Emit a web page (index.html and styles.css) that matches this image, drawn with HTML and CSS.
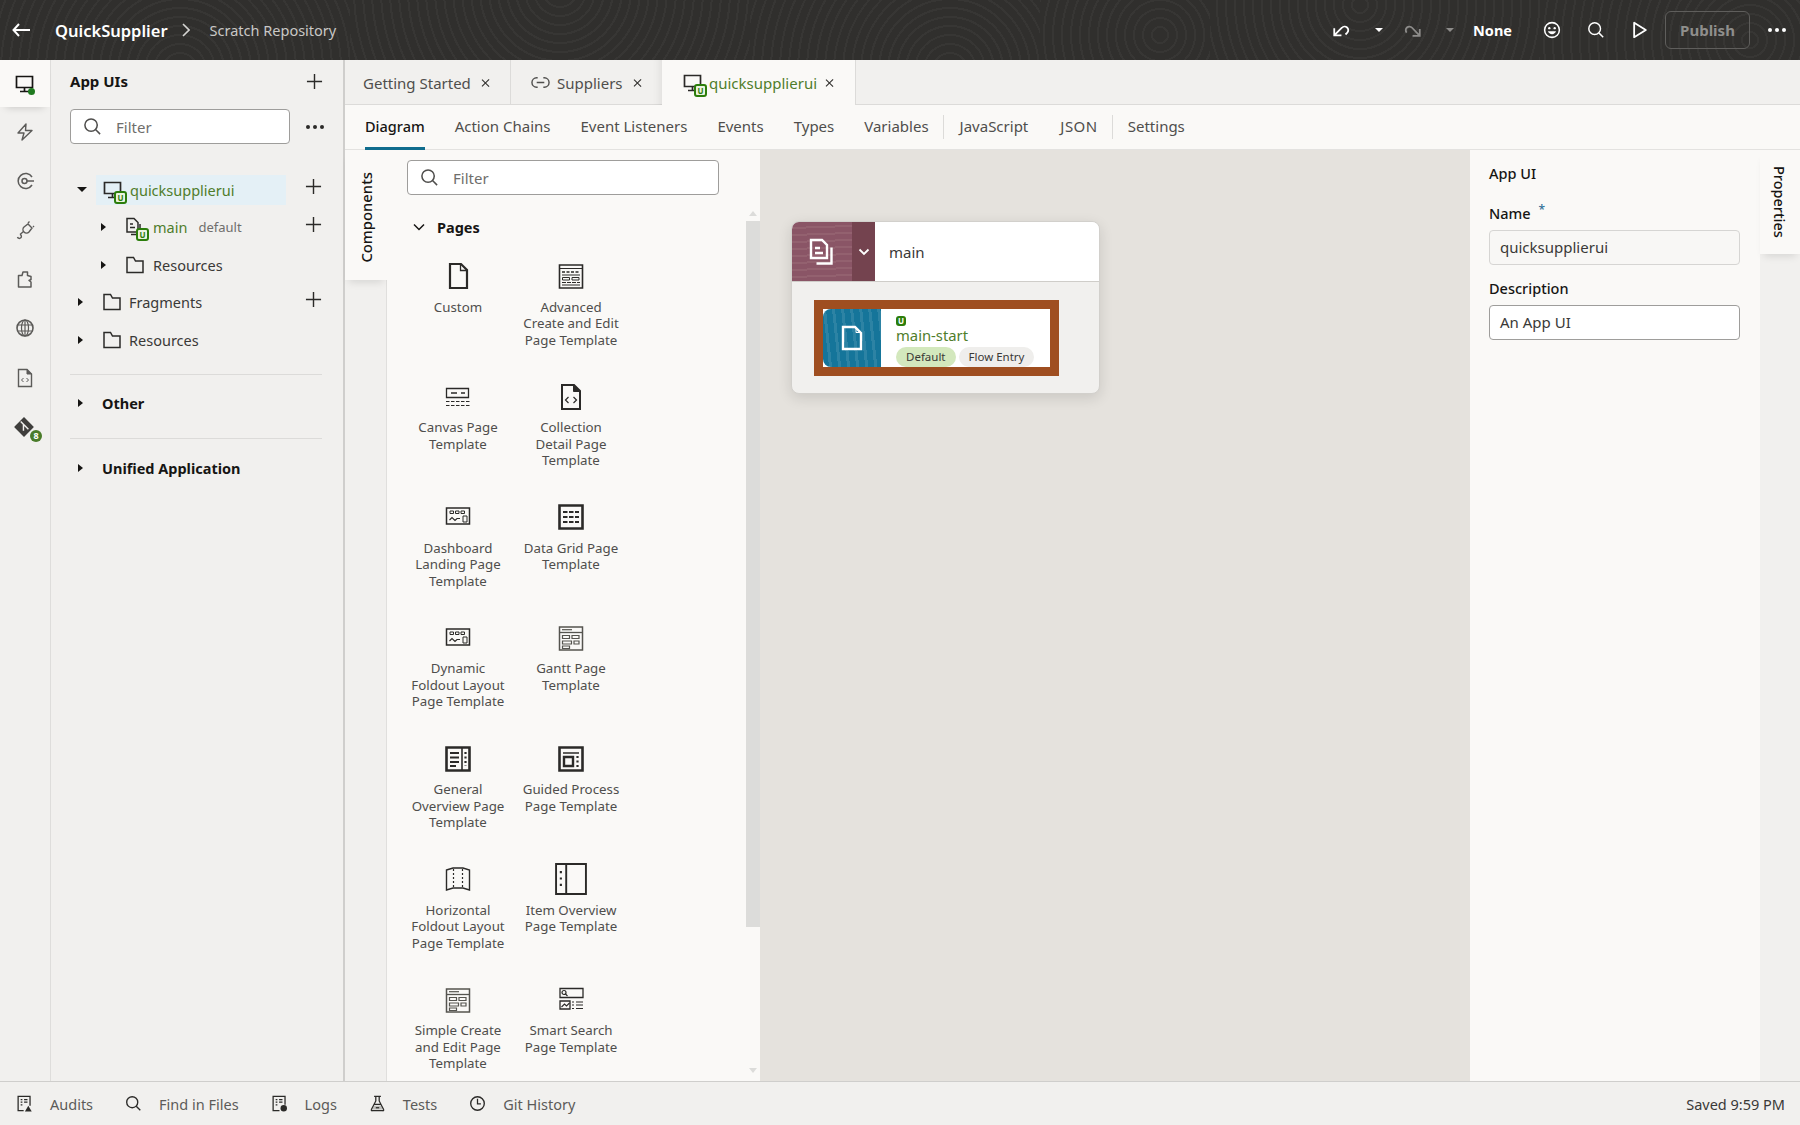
FILE: index.html
```html
<!DOCTYPE html>
<html lang="en">

<head>
  <meta charset="UTF-8">
  <meta name="viewport" content="width=device-width, initial-scale=1.0">
  <title>QuickSupplier - Scratch Repository</title>
  <link rel="stylesheet" href="styles.css">
</head>

<body>
  <svg class="defs" xmlns="http://www.w3.org/2000/svg">
    <symbol id="i-search" viewBox="0 0 20 20"><circle cx="8.5" cy="8.5" r="6.5" fill="none" stroke="currentColor" stroke-width="1.6"/><path d="M13.2 13.2 18 18" stroke="currentColor" stroke-width="1.6" fill="none"/></symbol>
    <symbol id="i-plus" viewBox="0 0 18 18"><path d="M9 1v16M1 9h16" stroke="currentColor" stroke-width="1.5" fill="none"/></symbol>
    <symbol id="i-monitor" viewBox="0 0 20 20"><path d="M1.500 2.500h16v11h-16zM9.500 13.500v3.500M5 17.500h9" fill="none" stroke="currentColor" stroke-width="1.700"/></symbol>
    <symbol id="i-bolt" viewBox="0 0 20 20"><path d="M11 2 3 11h6l-2 7 10-9.500h-6.500z" fill="none" stroke="currentColor" stroke-width="1.400" stroke-linejoin="round"/></symbol>
    <symbol id="i-event" viewBox="0 0 20 20"><path d="M17 6A7.500 7.500 0 1 0 17 14" fill="none" stroke="currentColor" stroke-width="1.500"/><circle cx="9.500" cy="10" r="2.500" fill="none" stroke="currentColor" stroke-width="1.500"/><path d="M12 10h7" stroke="currentColor" stroke-width="1.500"/></symbol>
    <symbol id="i-plug" viewBox="0 0 20 20"><path d="M9 7l4-3 4 4-3 4a3 3 0 0 1-5-5zM8.500 11.500 5 14.500M5 14.500a2 2 0 1 1-2.500 2.500M13 3l1.500-1.500M18 7l1-1" fill="none" stroke="currentColor" stroke-width="1.400"/></symbol>
    <symbol id="i-puzzle" viewBox="0 0 20 20"><path d="M3.500 18V6.500L7 6.500 8 3h4.500v3.500L16 7.500v3l-2 1 2 1.500v5z" fill="none" stroke="currentColor" stroke-width="1.500" stroke-linejoin="round"/></symbol>
    <symbol id="i-globe" viewBox="0 0 20 20"><circle cx="10" cy="10" r="8" fill="none" stroke="currentColor" stroke-width="1.600"/><ellipse cx="10" cy="10" rx="3.500" ry="8" fill="none" stroke="currentColor" stroke-width="1.200"/><path d="M2.500 7h15M2.500 13h15M10 2v16" stroke="currentColor" stroke-width="1.200"/></symbol>
    <symbol id="i-code" viewBox="0 0 20 20"><path d="M3.500 1.500h8.500l4.500 4.500v12.500h-13z" fill="none" stroke="currentColor" stroke-width="1.400"/><path d="M12 1.500v4.500h4.500" fill="currentColor" stroke="currentColor"/><path d="M8.500 10 6.500 12l2 2M11.500 10l2 2-2 2" fill="none" stroke="currentColor" stroke-width="1"/></symbol>
    <symbol id="i-git" viewBox="0 0 20 20"><path d="M10 1 19 10l-9 9-9-9z" fill="currentColor"/><path d="M7 5l7 7M9.500 7.500v6" stroke="#f1f0ee" stroke-width="1.300"/></symbol>
    <symbol id="i-folder" viewBox="0 0 20 20"><path d="M2 17.500V2.500h6.500l2 3.500h7.500v11.500z" fill="none" stroke="currentColor" stroke-width="1.500"/></symbol>
    <symbol id="i-pages" viewBox="0 0 20 20"><path d="M2 1.500h7l4 4v9.500H2z" fill="none" stroke="currentColor" stroke-width="1.500"/><path d="M5 7h3M5 10.500h5" stroke="currentColor" stroke-width="1.500"/><path d="M15 7v10.500H6" fill="none" stroke="currentColor" stroke-width="1.500"/></symbol>
    <symbol id="i-flow" viewBox="0 0 26 28"><path d="M2 2h11l5 5v13H2z" fill="none" stroke="currentColor" stroke-width="2.400"/><path d="M6 10h5M6 15h8" stroke="currentColor" stroke-width="2.400"/><path d="M22.500 9.500V25.500H7.500" fill="none" stroke="currentColor" stroke-width="2.400"/></symbol>
    <symbol id="i-link" viewBox="0 0 20 20"><path d="M7 5H6a5 5 0 0 0 0 10h1M13 5h1a5 5 0 0 1 0 10h-1M6 10h8" fill="none" stroke="currentColor" stroke-width="1.500"/></symbol>
    <symbol id="i-undo" viewBox="0 0 20 20"><path d="M2.500 8v8h8M3 15.500 11 7.500a4 4 0 0 1 6 5.500l-2 2" fill="none" stroke="currentColor" stroke-width="2"/></symbol>
    <symbol id="i-redo" viewBox="0 0 20 20"><path d="M17.500 9v7.500h-8M17 16 9 7.500a4 4 0 0 0-6 5.500" fill="none" stroke="currentColor" stroke-width="2"/></symbol>
    <symbol id="i-smile" viewBox="0 0 20 20"><circle cx="10" cy="10" r="8.200" fill="none" stroke="currentColor" stroke-width="1.700"/><circle cx="7" cy="8" r="1.300" fill="currentColor"/><circle cx="13" cy="8" r="1.300" fill="currentColor"/><path d="M5.500 11.500a4.800 4.800 0 0 0 9 0z" fill="currentColor"/></symbol>
    <symbol id="i-play" viewBox="0 0 20 20"><path d="M3.500 2v16l13-8z" fill="none" stroke="currentColor" stroke-width="2" stroke-linejoin="round"/></symbol>
    <symbol id="i-audit" viewBox="0 0 20 20"><path d="M9 18.500H2.500v-17h14v11" fill="none" stroke="currentColor" stroke-width="1.500"/><path d="M5.500 5.500h2M9.500 5.500h4M5.500 8.500h2M9.500 8.500h4M5.500 11.500h2" stroke="currentColor" stroke-width="1.500"/><path d="M14.500 12.500 18.500 19.500h-8z" fill="currentColor"/></symbol>
    <symbol id="i-log" viewBox="0 0 20 20"><path d="M10 18.500H2.500v-17h14v10" fill="none" stroke="currentColor" stroke-width="1.500"/><path d="M5.500 5.500h2M9.500 5.500h4M5.500 8.500h2M9.500 8.500h4M5.500 11.500h2" stroke="currentColor" stroke-width="1.500"/><circle cx="15" cy="15.500" r="3.800" fill="currentColor"/></symbol>
    <symbol id="i-flask" viewBox="0 0 20 20"><path d="M6 1.500h8M8 2v5L2.800 17a1 1 0 0 0 1 1.500h12.400a1 1 0 0 0 1-1.500L12 7V2M6 11h8" fill="none" stroke="currentColor" stroke-width="1.500"/><path d="M5.500 12.500h9l2 4.500h-13z" fill="currentColor" opacity=".25"/><path d="M8 15h4" stroke="currentColor" stroke-width="1.500"/></symbol>
    <symbol id="i-clock" viewBox="0 0 20 20"><circle cx="10" cy="10" r="8" fill="none" stroke="currentColor" stroke-width="1.600"/><path d="M10 4.500V10.500H14" fill="none" stroke="currentColor" stroke-width="1.500"/></symbol>

    <symbol id="t-custom" viewBox="0 0 26 30"><path d="M5 3h11l6 6v18H5z" fill="none" stroke="currentColor" stroke-width="2.200"/><path d="M15.500 3v6.500H22" fill="none" stroke="currentColor" stroke-width="1.300"/></symbol>
    <symbol id="t-advanced" viewBox="0 0 26 30"><path d="M1.500 4h23v23h-23z" fill="none" stroke="currentColor" stroke-width="1.600"/><path d="M1.500 7.500h23" stroke="currentColor" stroke-width="1"/><path d="M4 11h18" stroke="currentColor" stroke-width="1.500" stroke-dasharray="3 1.500"/><path d="M4 14h18M4 24h18" stroke="currentColor" stroke-width="1"/><path d="M4.500 16.500h7v2.500h-7zM14 16.500h7v2.500h-7z" fill="none" stroke="currentColor" stroke-width="1"/><path d="M4 21.500h18" stroke="currentColor" stroke-width="1.200" stroke-dasharray="4 1"/></symbol>
    <symbol id="t-canvas" viewBox="0 0 26 30"><path d="M1.500 6.500h22v9h-22z" fill="none" stroke="currentColor" stroke-width="1.300"/><path d="M6 11h6M16 11h4" stroke="currentColor" stroke-width="1.300"/><path d="M1 19.500h24M1 23.500h24" stroke="currentColor" stroke-width="1.200" stroke-dasharray="3.500 1.500"/></symbol>
    <symbol id="t-collection" viewBox="0 0 26 30"><path d="M4 3h12l6 6v18H4z" fill="none" stroke="currentColor" stroke-width="2"/><path d="M15.500 3v6.500H22" fill="currentColor" stroke="currentColor"/><path d="M10.500 15 7.500 18l3 3M15.500 15l3 3-3 3" fill="none" stroke="currentColor" stroke-width="1.200"/></symbol>
    <symbol id="t-dashboard" viewBox="0 0 26 30"><path d="M1.500 6h23v16h-23z" fill="none" stroke="currentColor" stroke-width="1.500"/><path d="M5 9h3.500v2.500H5zM10.500 9h3.500v2.500h-3.500zM16 9h3.500v2.500H16zM18 14h4v6h-4z" fill="none" stroke="currentColor" stroke-width="1"/><path d="M4.500 18l2.500-2.500 3 3 2-2h3" fill="none" stroke="currentColor" stroke-width="1.100"/></symbol>
    <symbol id="t-grid" viewBox="0 0 26 30"><path d="M1.500 3.500h23v23h-23z" fill="none" stroke="currentColor" stroke-width="2.600"/><path d="M5 10h16M5 15h16M5 20h16" stroke="currentColor" stroke-width="2.200" stroke-dasharray="4.500 1.500"/></symbol>
    <symbol id="t-form" viewBox="0 0 26 30"><path d="M1.500 4h23v23h-23z" fill="none" stroke="currentColor" stroke-width="1.500"/><path d="M1.500 9.500h23" stroke="currentColor" stroke-width="1.300"/><path d="M4 6.700h10" stroke="currentColor" stroke-width="1.200"/><path d="M4.500 12.500h7v3h-7zM14 12.500h7v3h-7zM4.500 18h9v3h-9zM16 18h5v3h-5zM4.500 23h7v2.500h-7z" fill="none" stroke="currentColor" stroke-width="1.200"/></symbol>
    <symbol id="t-general" viewBox="0 0 26 30"><path d="M1.500 3.500h23v23h-23z" fill="none" stroke="currentColor" stroke-width="2.600"/><path d="M17 3.500v23" stroke="currentColor" stroke-width="1.600"/><path d="M5 9h9M5 13.500h9M5 18h9M5 22h6" stroke="currentColor" stroke-width="2"/><path d="M20.500 8v14" stroke="currentColor" stroke-width="2.200" stroke-dasharray="2 2.500"/></symbol>
    <symbol id="t-guided" viewBox="0 0 26 30"><path d="M1.500 3.500h23v23h-23z" fill="none" stroke="currentColor" stroke-width="2.600"/><path d="M5 9h16" stroke="currentColor" stroke-width="1.500"/><path d="M6 13h9v9H6z" fill="none" stroke="currentColor" stroke-width="2.400"/><path d="M19.500 12v11" stroke="currentColor" stroke-width="2.200" stroke-dasharray="2 2.500"/></symbol>
    <symbol id="t-foldout" viewBox="0 0 26 30"><path d="M1.500 6 8 4h10l6.500 2v20l-6.500-2H8l-6.500 2z" fill="none" stroke="currentColor" stroke-width="1.400"/><path d="M8.500 5v19M17.500 5v19" stroke="currentColor" stroke-width="1.200" stroke-dasharray="2 2"/></symbol>
    <symbol id="t-item" viewBox="0 0 30 30"><path d="M1 1h28v28H1z" fill="none" stroke="currentColor" stroke-width="1.800"/><path d="M10.500 1v28" stroke="currentColor" stroke-width="1.800"/><path d="M5.500 7.500v16" stroke="currentColor" stroke-width="2" stroke-dasharray="2 4"/></symbol>
    <symbol id="t-smart" viewBox="0 0 26 30"><path d="M2 3.500h23v9H2zM2 16h10v8H2z" fill="none" stroke="currentColor" stroke-width="1.300"/><circle cx="6" cy="7.500" r="2" fill="none" stroke="currentColor" stroke-width="1.200"/><path d="M7.500 9l2 2M3.500 22l3-3 2 2 3-3" fill="none" stroke="currentColor" stroke-width="1.100"/><path d="M14 17h2M18 17h7M14 20h2M18 20h7M14 23.500h2M18 23.500h7" stroke="currentColor" stroke-width="1.200"/></symbol>
  </svg>

  <header class="topbar">
    <div class="top-left">
      <svg class="back" viewBox="0 0 18 14"><path d="M7 1 1.500 7 7 13M2 7h16" fill="none" stroke="currentColor" stroke-width="2"/></svg>
      <span class="app-name">QuickSupplier</span>
      <svg class="crumb" viewBox="0 0 8 14"><path d="M1 1l6 6-6 6" fill="none" stroke="currentColor" stroke-width="1.600"/></svg>
      <span class="repo">Scratch Repository</span>
    </div>
    <div class="top-right">
      <svg class="tool undo"><use href="#i-undo"/></svg>
      <span class="tcaret"></span>
      <svg class="tool redo"><use href="#i-redo"/></svg>
      <span class="tcaret dim"></span>
      <span class="none-label">None</span>
      <svg class="tool smile"><use href="#i-smile"/></svg>
      <svg class="tool find"><use href="#i-search"/></svg>
      <svg class="tool play"><use href="#i-play"/></svg>
      <button class="publish">Publish</button>
      <span class="top-dots"><i></i><i></i><i></i></span>
    </div>
  </header>

  <main class="workbench">
    <nav class="rail">
      <div class="rail-item active">
        <svg><use href="#i-monitor"/></svg><span class="rail-dot"></span>
      </div>
      <div class="rail-item"><svg><use href="#i-bolt"/></svg></div>
      <div class="rail-item"><svg><use href="#i-event"/></svg></div>
      <div class="rail-item"><svg><use href="#i-plug"/></svg></div>
      <div class="rail-item"><svg><use href="#i-puzzle"/></svg></div>
      <div class="rail-item"><svg><use href="#i-globe"/></svg></div>
      <div class="rail-item"><svg><use href="#i-code"/></svg></div>
      <div class="rail-item git"><svg><use href="#i-git"/></svg><span class="git-count">8</span></div>
    </nav>

    <aside class="side">
      <div class="side-head">
        <span class="side-title">App UIs</span>
        <svg class="plus"><use href="#i-plus"/></svg>
      </div>
      <div class="side-filter">
        <div class="filter side-input">
          <svg><use href="#i-search"/></svg><span>Filter</span>
        </div>
        <span class="dots"><i></i><i></i><i></i></span>
      </div>

      <ul class="tree">
        <li class="tree-row lvl0">
          <span class="caret down"></span>
          <div class="tree-sel">
            <span class="tree-icon"><svg><use href="#i-monitor"/></svg><b class="ubadge">U</b></span>
            <span class="green">quicksupplierui</span>
          </div>
          <svg class="plus raised"><use href="#i-plus"/></svg>
        </li>
        <li class="tree-row lvl1">
          <span class="caret"></span>
          <span class="tree-icon"><svg><use href="#i-pages"/></svg><b class="ubadge">U</b></span>
          <span class="green">main</span><span class="muted">default</span>
          <svg class="plus raised"><use href="#i-plus"/></svg>
        </li>
        <li class="tree-row lvl1">
          <span class="caret"></span>
          <span class="tree-icon"><svg><use href="#i-folder"/></svg></span>
          <span>Resources</span>
        </li>
        <li class="tree-row lvl0">
          <span class="caret"></span>
          <span class="tree-icon"><svg><use href="#i-folder"/></svg></span>
          <span>Fragments</span>
          <svg class="plus raised"><use href="#i-plus"/></svg>
        </li>
        <li class="tree-row lvl0">
          <span class="caret"></span>
          <span class="tree-icon"><svg><use href="#i-folder"/></svg></span>
          <span>Resources</span>
        </li>
      </ul>

      <div class="side-section first"><span class="caret"></span><strong>Other</strong></div>
      <div class="side-section"><span class="caret"></span><strong>Unified Application</strong></div>
    </aside>

    <section class="content">
      <div class="tabs">
        <div class="tab tab-start">Getting Started <span class="close"></span></div>
        <div class="tab tab-sup"><svg><use href="#i-link"/></svg>Suppliers <span class="close"></span></div>
        <div class="tab tab-cur">
          <span class="tree-icon"><svg><use href="#i-monitor"/></svg><b class="ubadge">U</b></span>
          <span class="green">quicksupplierui</span> <span class="close"></span>
        </div>
      </div>

      <div class="subnav">
        <a class="current">Diagram</a>
        <a>Action Chains</a>
        <a>Event Listeners</a>
        <a>Events</a>
        <a>Types</a>
        <a class="sep-after">Variables</a>
        <a class="js">JavaScript</a>
        <a class="sep-after json">JSON</a>
        <a>Settings</a>
      </div>

      <div class="editor">
        <div class="vtab-col left">
          <div class="vtab"><span>Components</span></div>
        </div>

        <div class="palette">
          <div class="palette-inner">
            <div class="filter palette-input">
              <svg><use href="#i-search"/></svg><span>Filter</span>
            </div>
            <div class="palette-head">
              <svg viewBox="0 0 12 8"><path d="M1 1.500 6 6.500l5-5" fill="none" stroke="currentColor" stroke-width="1.500"/></svg>
              <strong>Pages</strong>
            </div>
            <div class="templates">
              <div class="tpl"><svg><use href="#t-custom"/></svg><p>Custom</p></div>
              <div class="tpl"><svg><use href="#t-advanced"/></svg><p>Advanced<br>Create and Edit<br>Page Template</p></div>
              <div class="tpl"><svg><use href="#t-canvas"/></svg><p>Canvas Page<br>Template</p></div>
              <div class="tpl"><svg><use href="#t-collection"/></svg><p>Collection<br>Detail Page<br>Template</p></div>
              <div class="tpl"><svg><use href="#t-dashboard"/></svg><p>Dashboard<br>Landing Page<br>Template</p></div>
              <div class="tpl"><svg><use href="#t-grid"/></svg><p>Data Grid Page<br>Template</p></div>
              <div class="tpl"><svg><use href="#t-dashboard"/></svg><p>Dynamic<br>Foldout Layout<br>Page Template</p></div>
              <div class="tpl"><svg class="thin"><use href="#t-form"/></svg><p>Gantt Page<br>Template</p></div>
              <div class="tpl"><svg><use href="#t-general"/></svg><p>General<br>Overview Page<br>Template</p></div>
              <div class="tpl"><svg><use href="#t-guided"/></svg><p>Guided Process<br>Page Template</p></div>
              <div class="tpl"><svg><use href="#t-foldout"/></svg><p>Horizontal<br>Foldout Layout<br>Page Template</p></div>
              <div class="tpl"><svg class="wide"><use href="#t-item"/></svg><p>Item Overview<br>Page Template</p></div>
              <div class="tpl"><svg class="thin"><use href="#t-form"/></svg><p>Simple Create<br>and Edit Page<br>Template</p></div>
              <div class="tpl"><svg><use href="#t-smart"/></svg><p>Smart Search<br>Page Template</p></div>
            </div>
          </div>
          <div class="scroll">
            <span class="arrow up"></span>
            <span class="thumb"></span>
            <span class="arrow dn"></span>
          </div>
        </div>

        <div class="canvas">
          <div class="flow-card">
            <div class="flow-head">
              <div class="flow-badge"><svg><use href="#i-flow"/></svg></div>
              <div class="flow-toggle"><svg viewBox="0 0 12 8"><path d="M1.500 1.500 6 6l4.500-4.500" fill="none" stroke="currentColor" stroke-width="1.800"/></svg></div>
              <span class="flow-name">main</span>
            </div>
            <div class="flow-body">
              <div class="page-node">
                <div class="page-thumb"><svg viewBox="0 0 22 26"><path d="M2 2h12l6 6v16H2z" fill="none" stroke="currentColor" stroke-width="2.400"/><path d="M15 2.500v5h5" fill="none" stroke="currentColor" stroke-width="1"/></svg></div>
                <div class="page-info">
                  <b class="ubadge">U</b>
                  <span class="green page-name">main-start</span>
                  <div class="chips"><span class="chip on">Default</span><span class="chip">Flow Entry</span></div>
                </div>
              </div>
            </div>
          </div>
        </div>

        <div class="props">
          <h2>App UI</h2>
          <label class="field-label first">Name <span class="req">*</span></label>
          <div class="field readonly">quicksupplierui</div>
          <label class="field-label">Description</label>
          <div class="field">An App UI</div>
        </div>

        <div class="vtab-col right">
          <div class="vtab"><span>Properties</span></div>
        </div>
      </div>
    </section>
  </main>

  <footer class="statusbar">
    <a class="st-audit"><svg><use href="#i-audit"/></svg>Audits</a>
    <a><svg><use href="#i-search"/></svg>Find in Files</a>
    <a><svg><use href="#i-log"/></svg>Logs</a>
    <a><svg><use href="#i-flask"/></svg>Tests</a>
    <a><svg><use href="#i-clock"/></svg>Git History</a>
    <span class="saved">Saved 9:59 PM</span>
  </footer>
</body>

</html>
```

FILE: styles.css
```css
* {
  box-sizing: border-box;
}

html, body {
  margin: 0;
  height: 100%;
  overflow: hidden;
}

body {
  display: flex;
  flex-direction: column;
  background: #f1f0ee;
  color: #161513;
  font-family: "Noto Sans", Arial, sans-serif;
  font-size: 15px;
}

.defs {
  display: none;
}

ul {
  list-style: none;
  margin: 0;
  padding: 0;
}

.green {
  color: #4f7d2b;
}

/* top bar */
.topbar {
  height: 60px;
  flex: none;
  display: flex;
  align-items: center;
  justify-content: space-between;
  color: #fff;
  background-color: #302f2d;
  background-image:
    repeating-radial-gradient(circle at 180px 70px, transparent 0 7px, rgba(255,255,255,.035) 7px 9px),
    repeating-radial-gradient(circle at 210px -10px, transparent 0 7px, rgba(255,255,255,.035) 7px 9px),
    repeating-radial-gradient(circle at 200px 70px, transparent 0 7px, rgba(255,255,255,.035) 7px 9px),
    repeating-radial-gradient(circle at 120px 35px, transparent 0 7px, rgba(255,255,255,.035) 7px 9px),
    repeating-radial-gradient(circle at 150px 5px, transparent 0 7px, rgba(255,255,255,.035) 7px 9px),
    repeating-radial-gradient(circle at 210px 40px, transparent 0 7px, rgba(255,255,255,.035) 7px 9px);
  background-size: 350px 60px, 400px 60px, 290px 60px, 170px 60px, 330px 60px, 260px 60px;
  background-position: 0 0, 350px 0, 750px 0, 1040px 0, 1210px 0, 1540px 0;
  background-repeat: no-repeat;
}

.top-left, .top-right {
  display: flex;
  align-items: center;
}

.back {
  width: 18px;
  height: 14px;
  margin-left: 12px;
}

.app-name {
  margin-left: 25px;
  font-size: 16.500px;
  font-weight: 600;
}

.crumb {
  width: 8px;
  height: 14px;
  margin-left: 14px;
  color: #d5d4d2;
}

.repo {
  margin-left: 20px;
  font-size: 14.500px;
  color: #c9c8c6;
}

.tool {
  width: 18px;
  height: 18px;
}

.tcaret {
  width: 0;
  height: 0;
  margin-left: 25px;
  border: 4px solid transparent;
  border-top-color: #fff;
  border-bottom: 0;
}

.tcaret.dim {
  border-top-color: #8d8c8a;
}

.redo {
  margin-left: 21px;
  color: #8d8c8a;
}

.redo + .tcaret {
  margin-left: 24px;
}

.none-label {
  margin-left: 19px;
  font-size: 14.500px;
  font-weight: 700;
}

.smile {
  margin-left: 31px;
}

.find {
  margin-left: 26px;
}

.play {
  margin-left: 26px;
}

.publish {
  width: 85px;
  height: 38px;
  margin-left: 16px;
  border: 1px solid #5f5e5c;
  border-radius: 6px;
  background: transparent;
  color: #8f8e8c;
  font: 700 15px "Noto Sans", Arial, sans-serif;
}

.top-dots {
  display: flex;
  gap: 3px;
  margin: 0 14px 0 18px;
}

.top-dots i, .dots i {
  width: 4px;
  height: 4px;
  border-radius: 50%;
  background: currentColor;
}

/* workbench */
.workbench {
  flex: 1;
  min-height: 0;
  display: flex;
}

.rail {
  width: 51px;
  flex: none;
  border-right: 1px solid #dedddb;
  color: #5c5b59;
}

.rail-item {
  position: relative;
  height: 49.200px;
  display: flex;
  align-items: center;
  justify-content: center;
}

.rail-item svg {
  width: 20px;
  height: 20px;
}

.rail-item.active {
  height: 47px;
  background: #faf9f7;
  color: #161513;
  box-shadow: 0 6px 8px -6px rgba(0,0,0,.2);
}

.rail-dot {
  position: absolute;
  left: 28px;
  top: 28px;
  width: 7px;
  height: 7px;
  border-radius: 50%;
  background: #1f7a1f;
}

.rail-item.git svg {
  width: 22px;
  height: 22px;
  color: #3f3e3c;
  margin-left: -2px;
}

.git-count {
  position: absolute;
  left: 30px;
  top: 28px;
  width: 12px;
  height: 12px;
  border-radius: 50%;
  background: #4a7c2a;
  color: #fff;
  font-size: 9px;
  font-weight: 700;
  line-height: 12px;
  text-align: center;
}

/* side panel */
.side {
  width: 294px;
  flex: none;
  border-right: 2px solid #cfcecc;
  padding-left: 19px;
  font-size: 14.500px;
}

.side-head {
  height: 42px;
  display: flex;
  align-items: center;
  justify-content: space-between;
  padding: 0 20px 0 0;
}

.side-title {
  font-size: 15px;
  font-weight: 700;
}

.plus {
  width: 17px;
  height: 17px;
  color: #2b2a28;
  flex: none;
}

.filter {
  display: flex;
  align-items: center;
  height: 35px;
  background: #fff;
  border: 1px solid #9e9d9b;
  border-radius: 4px;
  color: #6f6e6c;
  font-size: 15px;
}

.filter svg {
  width: 19px;
  height: 19px;
  color: #4f4e4c;
  margin: 0 14px 0 12px;
  flex: none;
}

.side-filter {
  display: flex;
  align-items: center;
  margin-top: 7px;
}

.side-input {
  width: 220px;
}

.dots {
  display: flex;
  gap: 3px;
  margin-left: 16px;
  color: #2b2a28;
}

.tree {
  margin-top: 27px;
}

.tree-row {
  position: relative;
  height: 37.500px;
  display: flex;
  align-items: center;
  color: #3a3937;
}

.tree-row.lvl0 {
  padding-left: 8px;
}

.tree-row.lvl1 {
  padding-left: 31px;
}

.tree-row .plus {
  position: absolute;
  left: 235px;
  top: 7px;
}

.caret {
  width: 0;
  height: 0;
  flex: none;
  margin-right: 19px;
  border-style: solid;
  border-width: 4.500px 0 4.500px 5px;
  border-color: transparent transparent transparent #161513;
}

.caret.down {
  margin-left: -1px;
  margin-right: 14px;
  border-width: 5px 5px 0;
  border-color: #161513 transparent transparent;
}

.tree-sel {
  display: flex;
  align-items: center;
  width: 190px;
  height: 30px;
  margin-left: -5px;
  padding-left: 7px;
  background: #e4f0f6;
}

.tree-icon {
  position: relative;
  width: 20px;
  height: 20px;
  flex: none;
  margin-right: 7px;
  color: #2b2a28;
  display: inline-block;
}

.lvl1 .tree-icon {
  margin-right: 8px;
}

.tree-icon svg {
  width: 20px;
  height: 20px;
  display: block;
}

.ubadge {
  display: inline-block;
  width: 10px;
  height: 10px;
  border-radius: 3px;
  background: #2b7d0b;
  color: #fff;
  font-size: 8px;
  font-weight: 700;
  line-height: 10px;
  text-align: center;
}

.tree-icon .ubadge {
  position: absolute;
  right: -4px;
  bottom: -4px;
  width: 13px;
  height: 13px;
  border: 2px solid #2b7d0b;
  background: #eaf3df;
  color: #2b7d0b;
  line-height: 9px;
}

.muted {
  margin-left: 11px;
  color: #6f6e6c;
  font-size: 13px;
}

.side-section {
  display: flex;
  align-items: center;
  width: 252px;
  height: 64.500px;
  padding: 0 0 6px 8px;
  border-top: 1px solid #dcdbd9;
}

.side-section.first {
  margin-top: 15px;
}

.side-section strong {
  font-size: 14.500px;
  font-weight: 700;
}

.side-section .caret {
  margin-right: 19px;
}

/* main column */
.content {
  flex: 1;
  min-width: 0;
  display: flex;
  flex-direction: column;
}

.tabs {
  height: 45px;
  flex: none;
  display: flex;
  border-bottom: 1px solid #dcdbd9;
  color: #4f4e4c;
}

.tab {
  display: flex;
  align-items: center;
  height: 45px;
  white-space: pre;
}

.tab-start {
  width: 166px;
  padding-left: 18px;
  border-right: 1px solid #dcdbd9;
}

.tab-sup {
  width: 151px;
  padding-left: 20px;
  box-shadow: inset -10px 0 8px -8px rgba(0,0,0,.08);
}

.tab-sup svg {
  width: 19px;
  height: 19px;
  margin-right: 7px;
}

.tab-cur {
  width: 194px;
  padding-left: 21px;
  background: #faf9f7;
  border-right: 1px solid #dcdbd9;
}

.tab-cur .tree-icon {
  margin-right: 6px;
}

.close {
  position: relative;
  width: 10px;
  height: 10px;
  margin-left: 6px;
}

.tab-sup .close {
  margin-left: 7px;
}

.tab-cur .close {
  margin-left: 8px;
}

.close::before, .close::after {
  content: "";
  position: absolute;
  left: 4px;
  top: 0;
  width: 1.300px;
  height: 10px;
  background: #2b2a28;
  transform: rotate(45deg);
}

.close::after {
  transform: rotate(-45deg);
}

.subnav {
  height: 45px;
  flex: none;
  display: flex;
  padding-left: 20px;
  background: #faf9f7;
  border-bottom: 1px solid #e3e2e0;
  color: #4f4e4c;
}

.subnav a {
  height: 45px;
  line-height: 43px;
  margin-right: 30px;
  position: relative;
}

.subnav a.current {
  color: #161513;
  font-size: 14.500px;
  font-weight: 500;
  border-bottom: 3px solid #0f6c8d;
}

.subnav a.sep-after::after {
  content: "";
  position: absolute;
  right: -15px;
  top: 10px;
  height: 24px;
  border-right: 1px solid #dcdbd9;
}

.subnav .js {
  margin-left: 1px;
}

.subnav .json {
  margin-left: 2px;
  letter-spacing: .5px;
}

.editor {
  flex: 1;
  min-height: 0;
  display: flex;
}

.vtab-col {
  flex: none;
  background: #f1f0ee;
}

.vtab-col.left {
  width: 42px;
  border-right: 1px solid #e0dfdd;
}

.vtab-col.right {
  width: 40px;
}

.vtab {
  display: flex;
  justify-content: center;
  align-items: flex-start;
  background: #faf9f7;
  box-shadow: 0 6px 8px -4px rgba(0,0,0,.12);
}

.vtab span {
  writing-mode: vertical-rl;
  font-size: 14.500px;
  font-weight: 500;
}

.left .vtab {
  width: 42px;
  height: 130px;
  padding-top: 22px;
}

.left .vtab span {
  font-size: 14.800px;
  transform: rotate(180deg);
}

.right .vtab {
  height: 104px;
  padding-top: 16px;
}

/* palette */
.palette {
  width: 373px;
  flex: none;
  display: flex;
  background: #faf9f7;
}

.palette-inner {
  flex: 1;
  min-width: 0;
  overflow: hidden;
  padding: 10px 0 0 20px;
}

.palette-input {
  width: 312px;
}

.palette-head {
  display: flex;
  align-items: center;
  height: 32px;
  margin-top: 16px;
  padding-left: 6px;
}

.palette-head svg {
  width: 12px;
  height: 8px;
  margin-right: 12px;
}

.palette-head strong {
  font-size: 14.500px;
  font-weight: 700;
}

.templates {
  display: grid;
  grid-template-columns: 113px 113px;
  grid-auto-rows: 120.650px;
  margin: 18px 0 0 -5.500px;
}

.tpl {
  text-align: center;
  color: #2b2a28;
}

.tpl svg {
  display: block;
  width: 26px;
  height: 30px;
  margin: 0 auto 7.500px;
}

.tpl svg.thin {
  color: #55544f;
}

.tpl svg.wide {
  width: 32px;
  height: 32px;
  margin: -1px auto 6.500px;
}

.tpl p {
  margin: 0;
  color: #4f4e4c;
  font-size: 13.300px;
  line-height: 16.500px;
  white-space: nowrap;
}

.scroll {
  width: 14px;
  flex: none;
  display: flex;
  flex-direction: column;
  align-items: center;
  padding-top: 61px;
}

.thumb {
  width: 14px;
  height: 706px;
  margin-top: 5px;
  background: #dcdcda;
}

.arrow {
  width: 0;
  height: 0;
  border-left: 4px solid transparent;
  border-right: 4px solid transparent;
}

.arrow.up {
  border-bottom: 5px solid #dcdcda;
}

.arrow.dn {
  margin-top: 141px;
  border-top: 5px solid #dcdcda;
}

/* canvas */
.canvas {
  flex: 1;
  min-width: 0;
  padding: 71px 0 0 31px;
  background: #e5e2dd;
}

.flow-card {
  width: 309px;
  height: 173px;
  border: 1px solid #d2d0cc;
  border-radius: 8px;
  overflow: hidden;
  background: #f1f0ee;
  box-shadow: 0 4px 14px rgba(0,0,0,.12);
}

.flow-head {
  display: flex;
  align-items: center;
  height: 60px;
  background: #fff;
  border-bottom: 1px solid #cfcdc9;
}

.flow-badge {
  width: 60px;
  height: 59px;
  display: flex;
  align-items: center;
  justify-content: center;
  color: #fff;
  background: repeating-linear-gradient(178deg, #8a5566 0 5px, #93616f 5px 7px);
}

.flow-badge svg {
  width: 26px;
  height: 28px;
}

.flow-toggle {
  width: 23px;
  height: 59px;
  display: flex;
  align-items: center;
  justify-content: center;
  color: #fff;
  background: #74434f;
}

.flow-toggle svg {
  width: 12px;
  height: 8px;
}

.flow-name {
  margin-left: 14px;
  color: #3a3937;
}

.flow-body {
  padding: 18px 22px;
}

.page-node {
  width: 245px;
  height: 76px;
  display: flex;
  border: 9px solid #9f4e20;
  background: #fff;
}

.page-thumb {
  width: 58px;
  flex: none;
  display: flex;
  align-items: center;
  justify-content: center;
  color: #fff;
  border-radius: 8px 0 0 8px;
  background:
    repeating-linear-gradient(84deg, transparent 0 6px, rgba(255,255,255,.1) 6px 9px),
    #15759a;
}

.page-thumb svg {
  width: 22px;
  height: 26px;
}

.page-info {
  display: flex;
  flex-direction: column;
  align-items: flex-start;
  padding: 7px 0 0 15px;
  font-size: 14.800px;
  line-height: 18px;
}

.chips {
  display: flex;
  gap: 3px;
  margin-top: 3px;
}

.chip {
  height: 20px;
  padding: 0 10px;
  border-radius: 10px;
  background: #efeeec;
  color: #3a3937;
  font-size: 11.500px;
  line-height: 20px;
}

.chip.on {
  background: #d3e8bd;
}

/* properties */
.props {
  width: 290px;
  flex: none;
  padding: 12px 20px 0 19px;
  background: #faf9f7;
}

.props h2 {
  margin: 0 0 19px;
  font-size: 14.500px;
  font-weight: 500;
  line-height: 22px;
}

.field-label {
  display: block;
  font-size: 14.500px;
  font-weight: 500;
  line-height: 20px;
  margin-bottom: 7px;
}

.field-label.first {
  margin-bottom: 5px;
}

.req {
  position: relative;
  top: -5px;
  margin-left: 4px;
  color: #2f6f97;
  font-size: 12px;
}

.field {
  height: 35px;
  padding: 0 10px;
  margin-bottom: 13px;
  border: 1px solid #9e9d9b;
  border-radius: 4px;
  background: #fff;
  color: #3a3937;
  line-height: 32px;
}

.field.readonly {
  border-color: #d6d5d3;
  background: #f8f7f5;
}

/* status bar */
.statusbar {
  height: 44px;
  flex: none;
  display: flex;
  align-items: center;
  border-top: 1px solid #cfcecc;
  color: #5c5b59;
  font-size: 14.500px;
}

.statusbar a {
  display: flex;
  align-items: center;
  margin-left: 32px;
}

.statusbar svg {
  width: 17px;
  height: 17px;
  color: #2b2a28;
  margin-right: 17px;
}

.statusbar .st-audit {
  margin-left: 16px;
}

.saved {
  margin-left: auto;
  margin-right: 15px;
  color: #3a3937;
}
```
